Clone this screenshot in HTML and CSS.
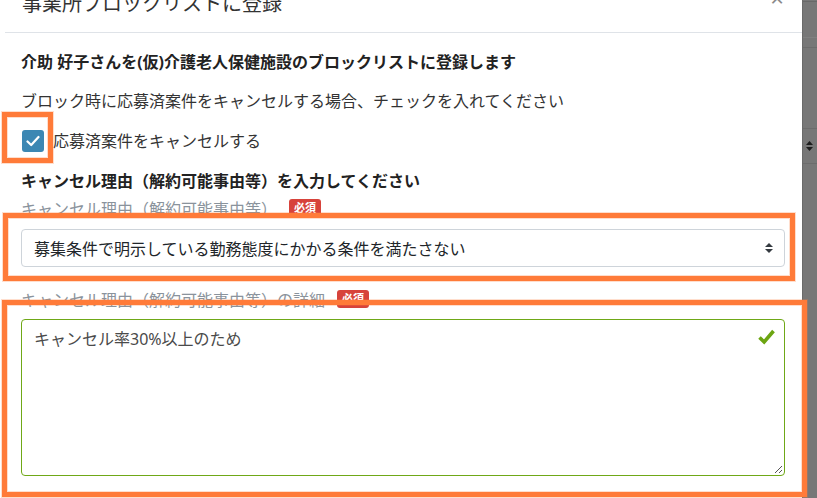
FILE: index.html
```html
<!DOCTYPE html>
<html lang="ja">
<head>
<meta charset="utf-8">
<title>事業所ブロックリストに登録</title>
<link rel="stylesheet" href="styles.css">
</head>
<body>
<div class="page">
  <div class="modal">
    <div class="modal-header">
      <h5 class="modal-title">事業所ブロックリストに登録</h5>
      <span class="close">×</span>
    </div>
    <div class="modal-body">
      <p class="lead-strong">介助 好子さんを(仮)介護老人保健施設のブロックリストに登録します</p>
      <p class="note">ブロック時に応募済案件をキャンセルする場合、チェックを入れてください</p>
      <div class="check-row">
        <span class="checkbox">
          <svg width="14" height="12" viewBox="0 0 14 12"><path d="M1.5 6.5 L5.2 10 L12.5 2" fill="none" stroke="#fff" stroke-width="2.2" stroke-linecap="round" stroke-linejoin="round"/></svg>
        </span>
        <span class="check-label">応募済案件をキャンセルする</span>
      </div>
      <p class="section-title">キャンセル理由（解約可能事由等）を入力してください</p>
      <div class="field">
        <div class="field-label">キャンセル理由（解約可能事由等）<span class="badge">必須</span></div>
        <div class="select">
          <span>募集条件で明示している勤務態度にかかる条件を満たさない</span>
          <svg class="arrows" width="8" height="10" viewBox="0 0 8 10"><path d="M4 0 L8 4 H0 Z M0 6 H8 L4 10 Z" fill="#343a40"/></svg>
        </div>
      </div>
      <div class="field field-detail">
        <div class="field-label">キャンセル理由（解約可能事由等）の詳細<span class="badge">必須</span></div>
        <div class="textarea">
          <span>キャンセル率30%以上のため</span>
          <svg class="valid-icon" width="17" height="16" viewBox="0 0 17 16"><path d="M1.5 8.5 L6.2 13 L15.5 2" fill="none" stroke="#6ca512" stroke-width="3.6" stroke-linejoin="miter"/></svg>
          <svg class="grip" width="10" height="10" viewBox="0 0 10 10"><path d="M9 2 L2 9 M9 6 L6 9" stroke="#555" stroke-width="1"/></svg>
        </div>
      </div>
    </div>
  </div>
  <div class="backdrop">
    <div class="bd-line"></div>
    <div class="bd-row"></div>
    <div class="bd-select">
      <svg width="7" height="10" viewBox="0 0 7 10"><path d="M3.5 0 L7 4 H0 Z M0 6 H7 L3.5 10 Z" fill="#1c1c1c"/></svg>
    </div>
  </div>
  <div class="hl hl-check"></div>
  <div class="hl hl-select"></div>
  <div class="hl hl-detail"></div>
</div>
</body>
</html>
```
FILE: styles.css
```css
* { box-sizing: border-box; }
html, body { margin: 0; padding: 0; }
body {
  font-family: "Noto Sans", "Noto Sans CJK JP", sans-serif;
  color: #212529;
  background: #777;
}
.page {
  position: relative;
  width: 817px;
  height: 498px;
  overflow: hidden;
  display: flex;
}
.modal {
  width: 803px;
  flex: none;
  background: #fff;
  border-right: 1px solid #6a6a6a;
}
.modal-header {
  margin-top: -11px;
  margin-left: 5px;
  height: 44px;
  padding: 0 18px 0 17px;
  border-bottom: 1px solid #dfe3e8;
  display: flex;
  justify-content: space-between;
  align-items: flex-start;
}
.modal-title {
  margin: 0;
  font-size: 20px;
  line-height: 30px;
  font-weight: 400;
  color: #333;
}
.close {
  font-size: 24px;
  line-height: 20px;
  color: #8a8a8a;
  margin-top: -1px;
}
.modal-body {
  padding: 17px 17px 0 21px;
}
.lead-strong {
  margin: 0 0 15px;
  font-size: 16px;
  line-height: 24px;
  font-weight: 700;
  color: #222;
}
.note {
  margin: 0 0 16px;
  font-size: 16px;
  line-height: 24px;
  color: #333;
}
.check-row {
  display: flex;
  align-items: center;
  height: 24px;
  margin-bottom: 16px;
}
.checkbox {
  width: 22px;
  height: 22px;
  margin-left: 1px;
  border-radius: 3px;
  background: #3c87b3;
  display: flex;
  align-items: center;
  justify-content: center;
}
.check-label {
  margin-left: 9px;
  font-size: 16px;
  line-height: 24px;
  color: #333;
}
.section-title {
  margin: 0 0 3px;
  font-size: 16px;
  line-height: 24px;
  font-weight: 700;
  color: #222;
}
.field-label {
  display: flex;
  align-items: center;
  height: 24px;
  font-size: 16px;
  color: #8a939c;
  margin-bottom: 9px;
}
.field-detail { margin-top: 20px; }
.field-detail .field-label { margin-bottom: 8px; }
.badge {
  margin-left: 12px;
  padding: 2px 5px;
  font-size: 11px;
  line-height: 14px;
  font-weight: 700;
  color: #fff;
  background: #d7433b;
  border-radius: 3px;
}
.select {
  height: 38px;
  border: 1px solid #ced4da;
  border-radius: 4px;
  padding: 0 12px;
  display: flex;
  align-items: center;
  justify-content: space-between;
  font-size: 16px;
  color: #212529;
}
.arrows { margin-right: -1px; }
.textarea {
  position: relative;
  height: 157px;
  border: 1px solid #6fa817;
  border-radius: 4px;
  padding: 7px 12px;
  font-size: 16px;
  line-height: 24px;
  color: #4a4a4a;
}
.valid-icon {
  position: absolute;
  top: 9px;
  right: 9px;
}
.grip {
  position: absolute;
  right: 1px;
  bottom: 1px;
}
.backdrop {
  flex: 1;
  background: #777;
}
.bd-line {
  margin-top: 1px;
  height: 1px;
  background: #686868;
}
.bd-row {
  margin-top: 35px;
  height: 11px;
  border-top: 1px solid #808080;
  border-bottom: 1px solid #6c6c6c;
}
.bd-select {
  margin-top: 80px;
  height: 36px;
  border-top: 1px solid #6c6c6c;
  border-bottom: 1px solid #6c6c6c;
  display: flex;
  align-items: center;
  padding-left: 3px;
}
.hl {
  position: absolute;
  border: 5px solid #ff7b39;
  box-shadow: 0 0 0 1px rgba(255, 123, 57, 0.25), inset 0 0 0 1px rgba(255, 123, 57, 0.25);
}
.hl-check { left: 2px; top: 112px; width: 51px; height: 51px; }
.hl-select { left: 3px; top: 213px; width: 792px; height: 68px; }
.hl-detail { left: 2px; top: 300px; width: 805px; height: 197px; }
```
